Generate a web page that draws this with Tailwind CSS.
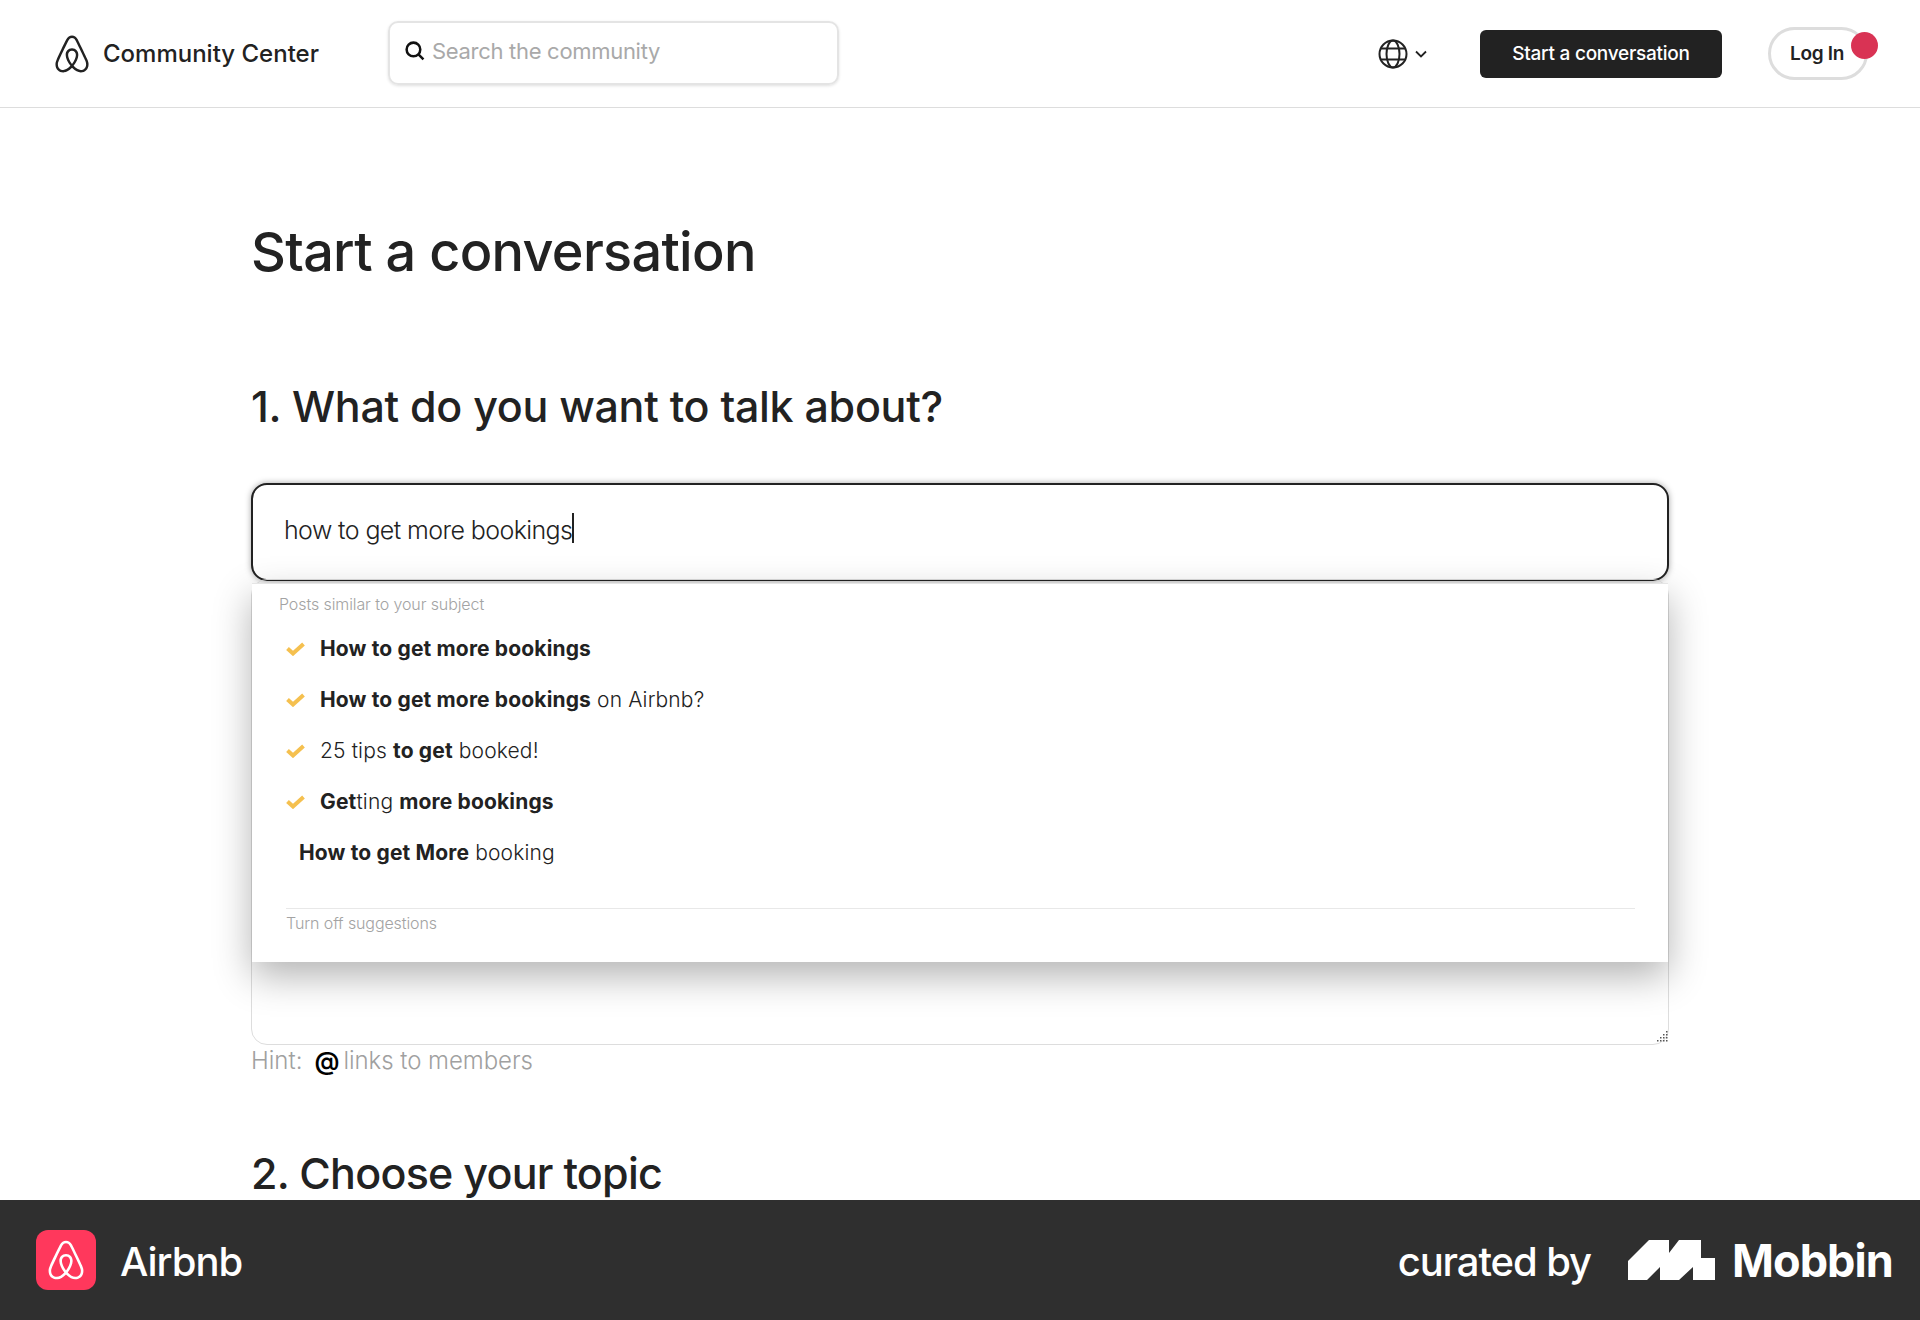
<!DOCTYPE html>
<html lang="en">
<head>
    <meta charset="UTF-8">
    <title>Start a conversation</title>
    <script src="https://cdn.jsdelivr.net/npm/@tailwindcss/browser@4"></script>
</head>
<body class="bg-white">
<div class="h-[1320px] flex flex-col overflow-hidden font-['Inter',sans-serif] text-[#222222]">
    <!-- Header -->
    <header class="h-[108px] shrink-0 border-b border-[#dddddd] flex items-center pl-[54px] pr-[52px]">
        <svg class="w-[36px] h-[38px]" viewBox="2 0.5 28 31" fill="#222222" fill-rule="evenodd"><path d="M16 1c2.008 0 3.463.963 4.751 3.269l.533 1.025c1.954 3.83 6.114 12.54 7.1 14.836l.145.353c.667 1.591.91 2.472.96 3.396l.01.415.001.228c0 4.062-2.877 6.478-6.357 6.478-2.224 0-4.556-1.258-6.709-3.386l-.257-.26-.172-.179h-.011l-.176.185c-2.044 2.1-4.267 3.42-6.414 3.615l-.28.019-.267.006C5.377 31 2.5 28.584 2.5 24.522l.005-.469c.026-.928.23-1.768.83-3.244l.216-.524c.966-2.298 6.083-12.989 7.707-16.034C12.537 1.963 13.992 1 16 1zm0 2c-1.239 0-2.053.539-2.987 2.21l-.523 1.008c-1.926 3.776-6.06 12.43-7.031 14.692l-.345.836c-.427 1.071-.573 1.655-.605 2.24l-.009.33v.206C4.5 27.395 6.411 29 8.857 29c1.773 0 3.87-1.236 5.831-3.354-2.295-2.938-3.855-6.45-3.855-8.91 0-2.913 1.933-5.386 5.167-5.386 3.234 0 5.167 2.473 5.167 5.385 0 2.456-1.555 5.96-3.845 8.907C19.277 27.766 21.373 29 23.144 29c2.446 0 4.357-1.605 4.357-4.478l-.004-.411c-.034-.75-.254-1.521-.91-3.14l-.15-.38c-.95-2.217-5.108-10.88-7.037-14.66l-.524-1.007C18.053 3.539 17.24 3 16 3zm.001 10.351c-1.932 0-3.168 1.52-3.168 3.385 0 1.927 1.29 4.826 3.163 7.365 1.874-2.538 3.17-5.441 3.17-7.365 0-1.865-1.233-3.385-3.165-3.385z"/></svg>
        <span class="ml-[13px] w-[285px] text-[24px] font-medium tracking-[0px]">Community Center</span>
        <div class="-mt-[2px] w-[451px] h-[64px] rounded-[10px] border-2 border-[#e4e4e4] shadow-[0_1px_3px_rgba(0,0,0,0.12)] flex items-center pl-[14px] pb-[3px]">
            <svg class="w-[21px] h-[21px] -mt-[1px]" viewBox="0 0 20 20" fill="none" stroke="#111111" stroke-width="2.4"><circle cx="9" cy="9" r="6.5"/><path d="M14 14l4.5 4.5"/></svg>
            <span class="ml-[7px] text-[22px] text-[#a9a9a9] tracking-[-0.3px]">Search the community</span>
        </div>
        <svg class="ml-auto w-[30px] h-[30px]" viewBox="0 0 30 30" fill="none" stroke="#222222" stroke-width="2"><circle cx="15" cy="15" r="13.5"/><ellipse cx="15" cy="15" rx="6.5" ry="13.5"/><path d="M3 9.5h24M3 20.5h24"/></svg>
        <svg class="ml-[7px] w-[12px] h-[8px]" viewBox="0 0 12 8" fill="none" stroke="#222222" stroke-width="1.8"><path d="M1 1.5l5 5 5-5"/></svg>
        <div class="ml-[53px] w-[242px] h-[48px] pt-[2px] bg-[#222222] rounded-[6px] flex items-center justify-center text-white text-[19px] font-medium tracking-[-0.25px]">Start a conversation</div>
        <div class="relative ml-[46px] w-[100px] h-[53px] rounded-full border-[3px] border-[#dddddd] flex items-center pl-[19px] pt-[2px] text-[19px] font-semibold tracking-[-0.3px]">
            Log In
            <span class="absolute left-[80px] top-[2px] w-[27px] h-[27px] rounded-full bg-[#d93354]"></span>
        </div>
    </header>

    <!-- Form -->
    <main class="flex-1 overflow-hidden pl-[251px] pr-[251px]">
        <h1 class="mt-[112px] text-[54px] leading-[64px] font-medium tracking-[-0.7px]">Start a conversation</h1>
        <h2 class="mt-[96px] text-[43px] leading-[52px] font-medium tracking-[-0.3px]">1. What do you want to talk about?</h2>
        <div class="relative mt-[51px]">
            <div class="h-[98px] rounded-[16px] border-2 border-[#222222] bg-white shadow-[0_0_6px_rgba(0,0,0,0.35)] pl-[31px] pt-[28px] text-[25px] leading-[34px] font-light tracking-[-0.6px] flex items-start">
                <span>how to get more bookings</span><span class="w-[2px] h-[30px] bg-[#222222]"></span>
            </div>
            <div class="relative h-[466px] -mt-[2px] rounded-[16px] border border-[#dddddd]">
                <svg class="absolute right-0 bottom-[1px] w-[12px] h-[12px]" viewBox="0 0 12 12" fill="#555555">
                    <rect x="10" y="0" width="1.5" height="1.5"/><rect x="10" y="3" width="1.5" height="1.5"/><rect x="7" y="3" width="1.5" height="1.5"/>
                    <rect x="10" y="6" width="1.5" height="1.5"/><rect x="7" y="6" width="1.5" height="1.5"/><rect x="4" y="6" width="1.5" height="1.5"/>
                    <rect x="10" y="9" width="1.5" height="1.5"/><rect x="7" y="9" width="1.5" height="1.5"/><rect x="4" y="9" width="1.5" height="1.5"/><rect x="1" y="9" width="1.5" height="1.5"/>
                </svg>
            </div>
            <!-- Suggestions -->
            <div class="absolute left-[1px] right-[1px] top-[100px] h-[379px] bg-white border-t border-[#e5e5e5] shadow-[0_14px_36px_rgba(0,0,0,0.3)] pt-[10px]">
                <div class="pl-[27px] text-[16px] leading-[20px] font-light tracking-[-0.1px] text-[#a3a3a3]">Posts similar to your subject</div>
                <div class="mt-[9px] h-[51px] flex items-center pl-[34px]">
                    <svg class="w-[19px] h-[14px]" viewBox="0 0 19 14" fill="none" stroke="#f5c04f" stroke-width="4"><path d="M1.5 6.5l5.5 5L17.5 2"/></svg>
                    <span class="ml-[15px] text-[21px] font-light tracking-[0.15px]"><b class="font-bold">How to get more bookings</b></span>
                </div>
                <div class="h-[51px] flex items-center pl-[34px]">
                    <svg class="w-[19px] h-[14px]" viewBox="0 0 19 14" fill="none" stroke="#f5c04f" stroke-width="4"><path d="M1.5 6.5l5.5 5L17.5 2"/></svg>
                    <span class="ml-[15px] text-[21px] font-light tracking-[0.15px]"><b class="font-bold">How to get more bookings</b> on Airbnb?</span>
                </div>
                <div class="h-[51px] flex items-center pl-[34px]">
                    <svg class="w-[19px] h-[14px]" viewBox="0 0 19 14" fill="none" stroke="#f5c04f" stroke-width="4"><path d="M1.5 6.5l5.5 5L17.5 2"/></svg>
                    <span class="ml-[15px] text-[21px] font-light tracking-[0.15px]">25 tips <b class="font-bold">to get</b> booked!</span>
                </div>
                <div class="h-[51px] flex items-center pl-[34px]">
                    <svg class="w-[19px] h-[14px]" viewBox="0 0 19 14" fill="none" stroke="#f5c04f" stroke-width="4"><path d="M1.5 6.5l5.5 5L17.5 2"/></svg>
                    <span class="ml-[15px] text-[21px] font-light tracking-[0.15px]"><b class="font-bold">Get</b>ting <b class="font-bold">more bookings</b></span>
                </div>
                <div class="h-[51px] flex items-center pl-[47px]">
                    <span class="text-[21px] font-light tracking-[0.15px]"><b class="font-bold">How to get More</b> booking</span>
                </div>
                <div class="mt-[30px] ml-[34px] mr-[33px] border-t border-[#e8e8e8] pt-[4px] text-[16px] leading-[20px] font-light tracking-[-0.1px] text-[#a3a3a3]">Turn off suggestions</div>
            </div>
        </div>
        <div class="text-[24px] leading-[32px] font-light text-[#a0a0a0] flex items-center">
            <span>Hint:</span><span class="ml-[12px] mr-[4px] text-[25px] font-semibold text-black">@</span><span class="tracking-[-0.05px]">links to members</span>
        </div>
        <h2 class="mt-[70px] text-[43px] leading-[52px] font-medium tracking-[-0.75px]">2. Choose your topic</h2>
    </main>

    <!-- Mobbin bar -->
    <footer class="h-[120px] shrink-0 bg-[#2f2f2f] flex items-center pl-[36px] pr-[27px] text-white">
        <div class="w-[60px] h-[60px] rounded-[12px] bg-[#ff385c] flex items-center justify-center">
            <svg class="w-[38px] h-[40px]" viewBox="2 0.5 28 31" fill="#ffffff" fill-rule="evenodd"><path d="M16 1c2.008 0 3.463.963 4.751 3.269l.533 1.025c1.954 3.83 6.114 12.54 7.1 14.836l.145.353c.667 1.591.91 2.472.96 3.396l.01.415.001.228c0 4.062-2.877 6.478-6.357 6.478-2.224 0-4.556-1.258-6.709-3.386l-.257-.26-.172-.179h-.011l-.176.185c-2.044 2.1-4.267 3.42-6.414 3.615l-.28.019-.267.006C5.377 31 2.5 28.584 2.5 24.522l.005-.469c.026-.928.23-1.768.83-3.244l.216-.524c.966-2.298 6.083-12.989 7.707-16.034C12.537 1.963 13.992 1 16 1zm0 2c-1.239 0-2.053.539-2.987 2.21l-.523 1.008c-1.926 3.776-6.06 12.43-7.031 14.692l-.345.836c-.427 1.071-.573 1.655-.605 2.24l-.009.33v.206C4.5 27.395 6.411 29 8.857 29c1.773 0 3.87-1.236 5.831-3.354-2.295-2.938-3.855-6.45-3.855-8.91 0-2.913 1.933-5.386 5.167-5.386 3.234 0 5.167 2.473 5.167 5.385 0 2.456-1.555 5.96-3.845 8.907C19.277 27.766 21.373 29 23.144 29c2.446 0 4.357-1.605 4.357-4.478l-.004-.411c-.034-.75-.254-1.521-.91-3.14l-.15-.38c-.95-2.217-5.108-10.88-7.037-14.66l-.524-1.007C18.053 3.539 17.24 3 16 3zm.001 10.351c-1.932 0-3.168 1.52-3.168 3.385 0 1.927 1.29 4.826 3.163 7.365 1.874-2.538 3.17-5.441 3.17-7.365 0-1.865-1.233-3.385-3.165-3.385z"/></svg>
        </div>
        <span class="ml-[24px] mt-[3px] text-[40px] font-medium tracking-[-1px]">Airbnb</span>
        <span class="ml-auto mt-[3px] text-[40px] font-medium tracking-[-1.1px]">curated by</span>
        <svg class="ml-[37px] w-[87px] h-[40px]" viewBox="0 0 87 40" fill="#ffffff"><path d="M0 21 21 0H41V13L51 0H73V18H87V40H65V27L51 40H32V27L19 40H0Z"/></svg>
        <span class="ml-[17px] mt-[1px] text-[45px] font-bold tracking-[-0.9px]">Mobbin</span>
    </footer>
</div>
</body>
</html>
